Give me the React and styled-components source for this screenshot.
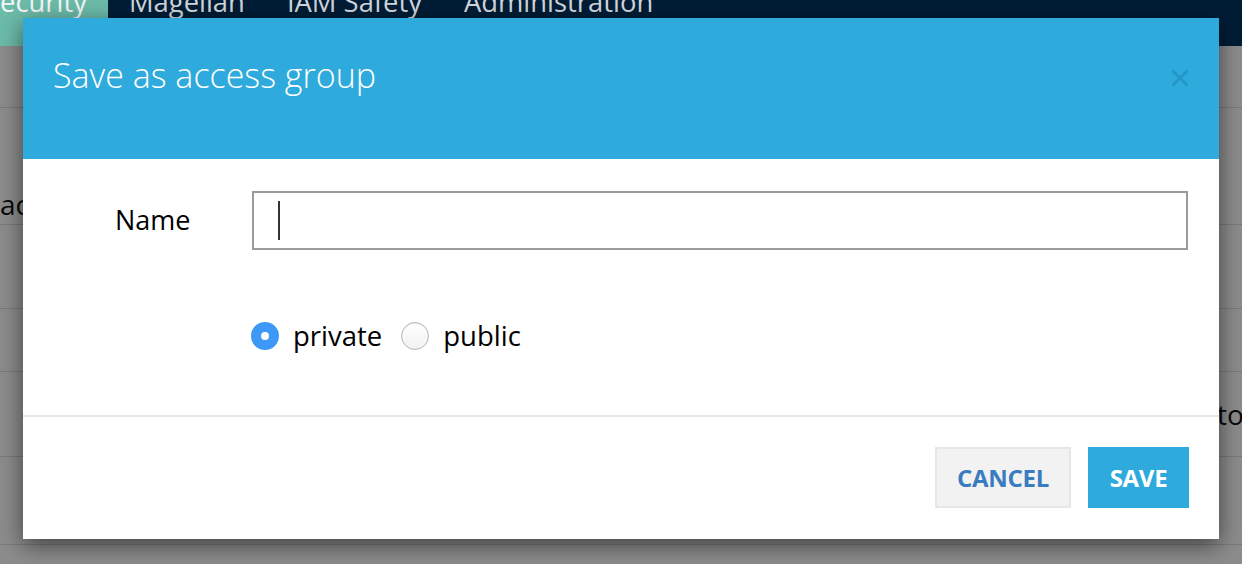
import React from "react";
import styled, { createGlobalStyle } from "styled-components";

const GlobalStyle = createGlobalStyle`
  html, body { margin: 0; padding: 0; }
  body { font-family: "Open Sans", "Noto Sans", sans-serif; background: #ffffff; }
  * { box-sizing: border-box; }
`;

const Page = styled.div`
  position: relative;
  width: 1242px;
  height: 564px;
  overflow: hidden;
  background: #ffffff;
  display: flex;
  flex-direction: column;
`;

const NavBar = styled.nav`
  height: 46px;
  flex: none;
  background: #001d36;
  display: flex;
  align-items: stretch;
  position: relative;
  z-index: 2;
`;

const NavTab = styled.div`
  padding: 0 21px;
  margin-left: ${(p) => (p.$first ? "-36px" : "0")};
  background: ${(p) => (p.$active ? "#6cbcaa" : "transparent")};
  color: ${(p) => (p.$active ? "#f4f7f6" : "#d3d8de")};
  font-size: 27.4px;
  line-height: 28px;
  white-space: nowrap;
  & > span { display: block; margin-top: -12px; }
`;

const SubHeader = styled.div`
  height: 62px;
  flex: none;
  border-bottom: 1px solid #dcdcdc;
`;

const Row = styled.div`
  height: ${(p) => p.$h}px;
  flex: none;
  border-bottom: 1px solid #dcdcdc;
  display: grid;
  grid-template-columns: 1207px 1fr;
  align-items: center;
  font-size: 28px;
  color: #111;
  white-space: nowrap;
  overflow: hidden;
`;

const Cell = styled.div`
  overflow: hidden;
  padding-top: ${(p) => p.$pt || 0}px;
`;

const Overlay = styled.div`
  position: absolute;
  left: 0;
  right: 0;
  top: 46px;
  bottom: 0;
  background: rgba(0, 0, 0, 0.45);
  z-index: 3;
`;

const Modal = styled.div`
  position: absolute;
  top: 18px;
  left: 23px;
  width: 1196px;
  height: 521px;
  background: #ffffff;
  box-shadow: 0 6px 22px rgba(0, 0, 0, 0.55);
  z-index: 4;
  display: flex;
  flex-direction: column;
`;

const Header = styled.div`
  height: 141px;
  flex: none;
  background: #2eaadc;
  display: flex;
  align-items: center;
  justify-content: space-between;
  padding: 0 30px 0 30px;
`;

const Title = styled.h2`
  margin: 0 0 28px 0;
  font-size: 34px;
  font-weight: 300;
  color: #ffffff;
  line-height: 1;
`;

const CloseButton = styled.button`
  border: 0;
  background: transparent;
  padding: 0;
  width: 18px;
  height: 18px;
  margin-bottom: 22px;
  display: flex;
  cursor: pointer;
`;

const Body = styled.div`
  height: 258px;
  flex: none;
  border-bottom: 2px solid #e6e6e6;
  padding: 32px 31px 0 0;
  display: flex;
  flex-direction: column;
`;

const FormRow = styled.div`
  display: grid;
  grid-template-columns: 229px 1fr;
  align-items: center;
`;

const Label = styled.label`
  padding-left: 92px;
  margin-top: -3px;
  font-size: 27px;
  color: #000;
`;

const InputWrap = styled.div`
  position: relative;
  height: 59px;
`;

const TextInput = styled.input`
  width: 100%;
  height: 100%;
  border: 2px solid #9b9b9b;
  outline: none;
  padding: 0 24px;
  font-family: inherit;
  font-size: 26px;
  background: #fff;
`;

const Caret = styled.span`
  position: absolute;
  left: 26px;
  top: 10px;
  width: 2px;
  height: 39px;
  background: #333;
`;

const RadioGroup = styled.div`
  display: flex;
  align-items: center;
  margin: 71px 0 0 228px;
`;

const RadioLabel = styled.label`
  display: flex;
  align-items: center;
  font-size: 27.5px;
  color: #000;
  margin-right: 19px;
  line-height: 30px;
`;

const Radio = styled.input.attrs({ type: "radio" })`
  appearance: none;
  -webkit-appearance: none;
  margin: 0 14px 0 0;
  width: 28px;
  height: 28px;
  border-radius: 50%;
  flex: none;
  background: linear-gradient(#ffffff, #f1f1f1);
  border: 1px solid #b5b5b5;
  box-shadow: inset 0 1px 1px rgba(0, 0, 0, 0.08);
  &:checked {
    border: 10px solid #3d99f5;
    background: #ffffff;
    box-shadow: none;
  }
`;

const Footer = styled.div`
  flex: 1;
  display: flex;
  justify-content: flex-end;
  align-items: flex-start;
  gap: 17px;
  padding: 30px 30px 0 0;
`;

const Button = styled.button`
  height: 61px;
  width: ${(p) => p.$w}px;
  font-family: "Open Sans", sans-serif;
  font-weight: 700;
  font-size: 24px;
  letter-spacing: -0.3px;
  cursor: pointer;
  background: ${(p) => (p.$primary ? "#2eaadc" : "#f2f2f2")};
  color: ${(p) => (p.$primary ? "#ffffff" : "#3a7cc0")};
  border: ${(p) => (p.$primary ? "0" : "2px solid #e6e6e6")};
  padding: 0;
`;

export default function App() {
  return (
    <>
      <GlobalStyle />
      <Page>
        <NavBar>
          <NavTab $active $first>
            <span>Security</span>
          </NavTab>
          <NavTab>
            <span>Magellan</span>
          </NavTab>
          <NavTab>
            <span>IAM Safety</span>
          </NavTab>
          <NavTab>
            <span>Administration</span>
          </NavTab>
        </NavBar>
        <SubHeader />
        <Row $h={117}>
          <Cell $pt={76}>ac</Cell>
          <Cell />
        </Row>
        <Row $h={84}>
          <Cell />
          <Cell />
        </Row>
        <Row $h={63}>
          <Cell />
          <Cell />
        </Row>
        <Row $h={85}>
          <Cell />
          <Cell $pt={0}>tton</Cell>
        </Row>
        <Row $h={88}>
          <Cell />
          <Cell />
        </Row>
        <Overlay />
        <Modal role="dialog" aria-label="Save as access group">
          <Header>
            <Title>Save as access group</Title>
            <CloseButton aria-label="Close">
              <svg width="18" height="18" viewBox="0 0 18 18">
                <path
                  d="M1.5 1.5 L16.5 16.5 M16.5 1.5 L1.5 16.5"
                  stroke="#2497c7"
                  strokeWidth="3"
                  fill="none"
                />
              </svg>
            </CloseButton>
          </Header>
          <Body>
            <FormRow>
              <Label htmlFor="group-name">Name</Label>
              <InputWrap>
                <TextInput id="group-name" type="text" />
                <Caret />
              </InputWrap>
            </FormRow>
            <RadioGroup>
              <RadioLabel>
                <Radio name="visibility" defaultChecked />
                private
              </RadioLabel>
              <RadioLabel>
                <Radio name="visibility" />
                public
              </RadioLabel>
            </RadioGroup>
          </Body>
          <Footer>
            <Button $w={136}>CANCEL</Button>
            <Button $w={101} $primary>
              SAVE
            </Button>
          </Footer>
        </Modal>
      </Page>
    </>
  );
}
